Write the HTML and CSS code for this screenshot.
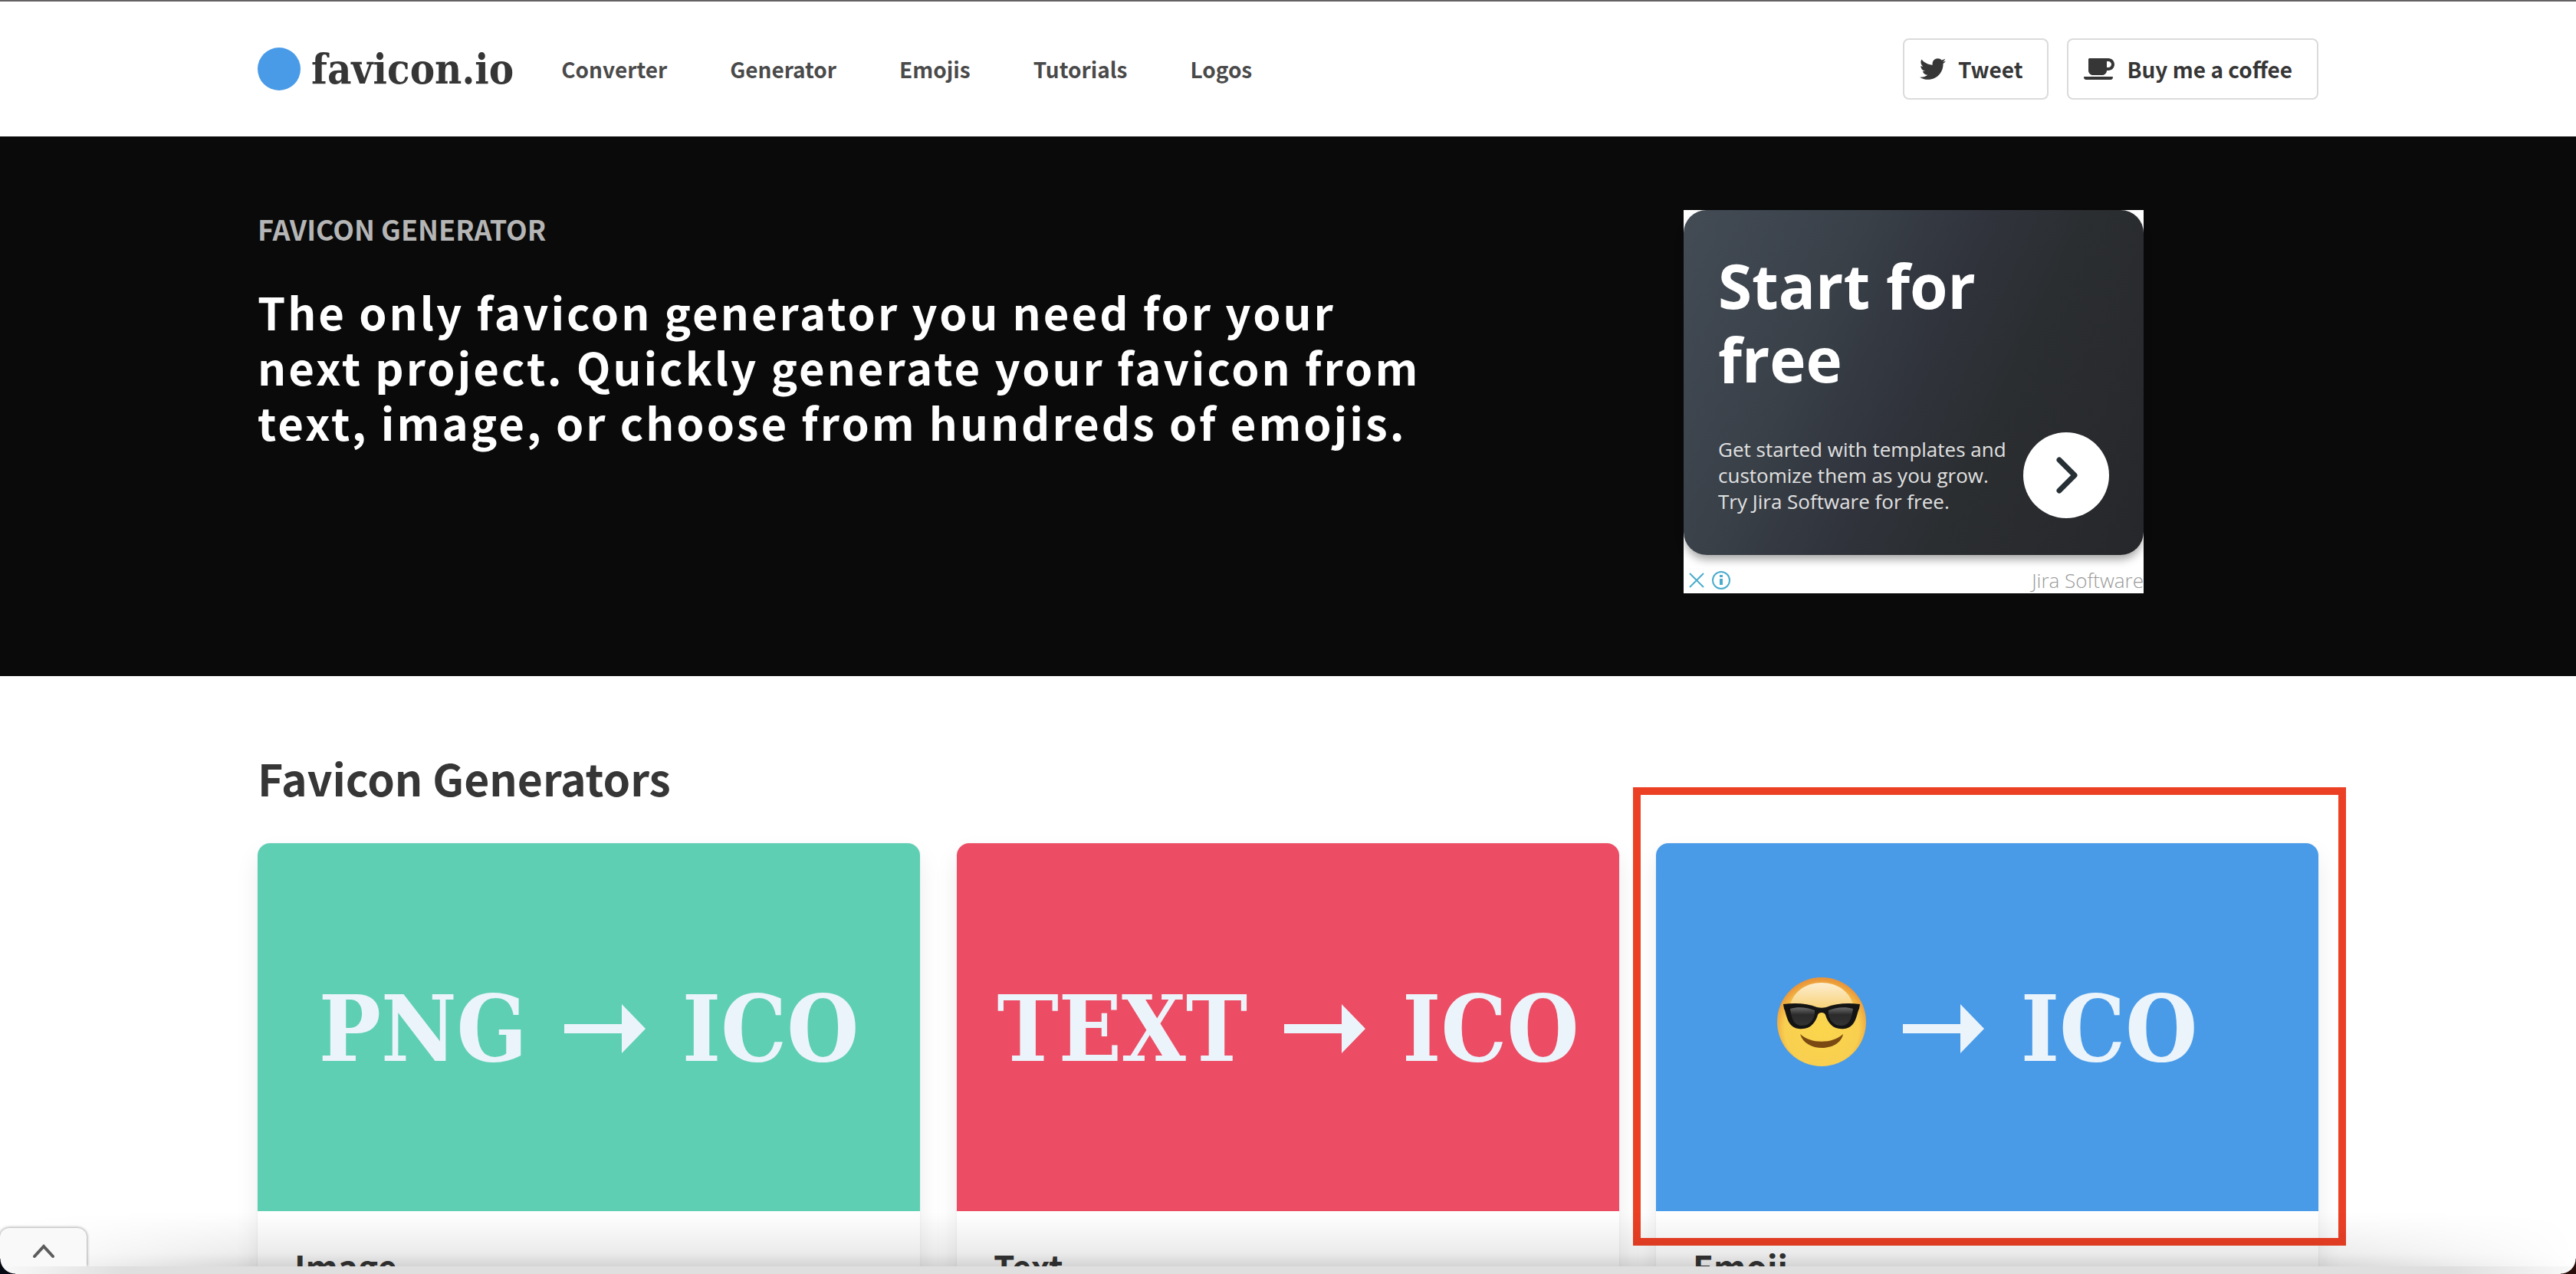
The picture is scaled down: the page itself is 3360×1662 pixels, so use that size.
FILE: index.html
```html
<!DOCTYPE html>
<html lang="en">
<head>
<meta charset="utf-8">
<meta name="viewport" content="width=device-width, initial-scale=1">
<title>favicon.io</title>
<link rel="stylesheet" href="styles.css">
</head>
<body>
<header class="header">
  <div class="container header-inner">
    <a class="brand" href="#"><span class="brand-dot"></span><span>favicon.io</span></a>
    <nav class="nav">
      <a href="#">Converter</a>
      <a href="#">Generator</a>
      <a href="#">Emojis</a>
      <a href="#">Tutorials</a>
      <a href="#">Logos</a>
    </nav>
    <div class="actions">
      <a class="button" href="#">
        <svg class="icon-bird" viewBox="0 0 512 512" aria-hidden="true"><path fill="currentColor" d="M459.37 151.716c.325 4.548.325 9.097.325 13.645 0 138.72-105.583 298.558-298.558 298.558-59.452 0-114.68-17.219-161.137-47.106 8.447.974 16.568 1.299 25.34 1.299 49.055 0 94.213-16.568 130.274-44.832-46.132-.975-84.792-31.188-98.112-72.772 6.498.974 12.995 1.624 19.818 1.624 9.421 0 18.843-1.3 27.614-3.573-48.081-9.747-84.143-51.98-84.143-102.985v-1.299c13.969 7.797 30.214 12.67 47.431 13.319-28.264-18.843-46.781-51.005-46.781-87.391 0-19.492 5.197-37.36 14.294-52.954 51.655 63.675 129.3 105.258 216.365 109.807-1.624-7.797-2.599-15.918-2.599-24.04 0-57.828 46.782-104.934 104.934-104.934 30.213 0 57.502 12.67 76.67 33.137 23.715-4.548 46.456-13.32 66.599-25.34-7.798 24.366-24.366 44.833-46.132 57.827 21.117-2.273 41.584-8.122 60.426-16.243-14.292 20.791-32.161 39.308-52.628 54.253z"/></svg>
        <span>Tweet</span>
      </a>
      <a class="button" href="#">
        <svg class="icon-cup" viewBox="0 0 640 512" aria-hidden="true"><path fill="currentColor" d="M192 384h192c53 0 96-43 96-96h32c70.600 0 128-57.400 128-128S582.600 32 512 32H120c-13.300 0-24 10.700-24 24v232c0 53 43 96 96 96zM512 96c35.300 0 64 28.700 64 64s-28.700 64-64 64h-32V96h32zm47.700 384H48.300c-47.600 0-61-64-36-64h583.300c25 0 11.800 64-35.900 64z"/></svg>
        <span>Buy me a coffee</span>
      </a>
    </div>
  </div>
</header>

<section class="hero">
  <div class="container hero-inner">
    <div class="hero-text">
      <p class="eyebrow">FAVICON GENERATOR</p>
      <h1 class="headline">The only favicon generator you need for your next project. Quickly generate your favicon from text, image, or choose from hundreds of emojis.</h1>
    </div>
    <aside class="ad">
      <a class="ad-card" href="#">
        <span class="ad-title">Start for free</span>
        <span class="ad-row">
          <span class="ad-copy">Get started with templates and customize them as you grow. Try Jira Software for free.</span>
          <svg class="ad-go" viewBox="0 0 112 112" aria-hidden="true"><circle cx="56" cy="56" r="56" fill="#fff"/><path d="M47 36l20 20-20 20" fill="none" stroke="#263035" stroke-width="7" stroke-linecap="round" stroke-linejoin="round"/></svg>
        </span>
      </a>
      <div class="ad-foot">
        <button class="ad-button" type="button" aria-label="Close ad"><svg viewBox="0 0 24 24"><path d="M3 3l18 18M21 3L3 21" fill="none" stroke="#4aaccc" stroke-width="2"/></svg></button>
        <button class="ad-button" type="button" aria-label="Ad information"><svg viewBox="0 0 24 24"><circle cx="12" cy="12" r="11" fill="none" stroke="#4aaccc" stroke-width="2"/><path d="M10 10h4v8h-4zM10 5h4v3h-4z" fill="#4aaccc"/></svg></button>
        <span class="ad-brand">Jira Software</span>
      </div>
    </aside>
  </div>
</section>

<main class="container generators">
  <h2 class="section-title">Favicon Generators</h2>
  <div class="cards">
    <a class="card" href="#">
      <div class="art art-green">
        <span>PNG</span>
        <svg class="arrow" viewBox="0 0 106 64" aria-hidden="true"><path d="M0 26h75V0l31 32-31 32V38H0z" fill="currentColor"/></svg>
        <span>ICO</span>
      </div>
      <h3 class="card-title">Image</h3>
    </a>
    <a class="card" href="#">
      <div class="art art-red">
        <span>TEXT</span>
        <svg class="arrow" viewBox="0 0 106 64" aria-hidden="true"><path d="M0 26h75V0l31 32-31 32V38H0z" fill="currentColor"/></svg>
        <span>ICO</span>
      </div>
      <h3 class="card-title">Text</h3>
    </a>
    <a class="card card-marked" href="#">
      <div class="art art-blue">
        <svg class="face" viewBox="0 0 116 116" aria-hidden="true">
          <defs>
            <radialGradient id="skin" cx="50%" cy="58%" r="56%"><stop offset="0" stop-color="#fbd64c"/><stop offset=".75" stop-color="#f8cf50"/><stop offset="1" stop-color="#ea9538"/></radialGradient>
            <linearGradient id="shine" x1="0" y1="0" x2="0" y2="1"><stop offset="0" stop-color="#fdeed0"/><stop offset="1" stop-color="#f8d27a"/></linearGradient>
            <linearGradient id="lens" x1="0" y1="0" x2="0" y2="1"><stop offset="0" stop-color="#6a6a6a"/><stop offset=".4" stop-color="#2b2b2b"/><stop offset="1" stop-color="#333"/></linearGradient>
          </defs>
          <circle cx="58" cy="58" r="58" fill="url(#skin)"/>
          <path d="M16 40C20 18 38 7 58 7s38 11 42 33z" fill="url(#shine)"/>
          <path d="M8 35c16-2 32-1 44 4 4 1 8 1 12 0 12-5 28-6 44-4l-1 6c-3 4-3 24-19 26-15 2-22-8-25-18-1-4-9-4-10 0-3 10-10 20-25 18-16-2-16-22-19-26z" fill="#141414"/>
          <path d="M17 41c10-3 22-2 32 2 1 9-5 20-16 20S19 55 17 41zM99 41c-10-3-22-2-32 2-1 9 5 20 16 20s14-8 16-22z" fill="url(#lens)"/>
          <path d="M30 74c14 13 42 13 56 0-4 23-49 25-56 0z" fill="#7a4a12"/>
        </svg>
        <svg class="arrow" viewBox="0 0 106 64" aria-hidden="true"><path d="M0 26h75V0l31 32-31 32V38H0z" fill="currentColor"/></svg>
        <span>ICO</span>
      </div>
      <h3 class="card-title">Emoji</h3>
    </a>
  </div>
</main>

<div class="shelf">
  <button class="shelf-tab" type="button" aria-label="Show"><svg viewBox="0 0 30 20"><path d="M3 17L15 4l12 13" fill="none" stroke="#5c5c5c" stroke-width="4" stroke-linecap="round"/></svg></button>
  <div class="shelf-bar"></div>
</div>
</body>
</html>
```
FILE: styles.css
```css
*, *::before, *::after { box-sizing: border-box; }

body {
  margin: 0;
  height: 100vh;
  overflow: hidden;
  background: #fff;
  color: #363636;
  font-family: "Source Sans Pro", "Noto Sans CJK SC", sans-serif;
  font-weight: 700;
}

a { color: inherit; text-decoration: none; }
h1, h2, h3, p { margin: 0; font-weight: 700; }
button { border: 0; padding: 0; background: none; }
svg { display: block; flex: none; }

.container { width: 80%; margin: 0 auto; }

.header { border-top: 2px solid #656263; }
.header-inner { display: flex; align-items: center; height: 176px; }

.brand {
  display: flex;
  align-items: center;
  gap: 14px;
  font: 700 54px/60px "Roboto Slab", "DejaVu Serif Condensed", "DejaVu Serif", serif;
}
.brand-dot { width: 56px; height: 56px; border-radius: 50%; background: #499be8; }

.nav {
  display: flex;
  gap: 82px;
  margin-left: 62px;
  color: #4a4a4a;
  font-size: 28px;
  line-height: 40px;
}

.actions { display: flex; gap: 24px; margin-left: auto; font-size: 28px; line-height: 40px; }
.button {
  display: flex;
  align-items: center;
  gap: 16px;
  height: 80px;
  padding: 0 32px 0 20px;
  border: 2px solid #dbdbdb;
  border-radius: 8px;
}
.icon-bird { width: 34px; height: 34px; }
.icon-cup { width: 40px; height: 32px; }

.hero { background: #0a0a0a; color: #fff; }
.hero-inner { display: flex; justify-content: space-between; padding: 96px 0 108px; }
.eyebrow { color: #b5b5b5; font-size: 36px; line-height: 48px; }
.headline {
  max-width: 1540px;
  margin-top: 48px;
  font-size: 58px;
  line-height: 72px;
  letter-spacing: 3px;
}

.ad {
  width: 600px;
  height: 500px;
  margin-right: 228px;
  background: #fff;
  font-family: "Open Sans", sans-serif;
}
.ad-card {
  display: flex;
  flex-direction: column;
  justify-content: space-between;
  height: 450px;
  padding: 50px 45px 48px;
  border-radius: 30px;
  background: linear-gradient(115deg, #434b55 0%, #394048 30%, #30333b 50%, #2b2e31 65%, #26272a 100%);
  box-shadow: 0 8px 12px -2px rgba(0, 0, 0, .35);
}
.ad-title { width: 400px; font-size: 80px; font-weight: 700; line-height: 96px; }
.ad-row { display: flex; align-items: center; justify-content: space-between; }
.ad-copy { width: 390px; color: #e0e0e0; font-size: 26px; font-weight: 400; line-height: 34px; }
.ad-go { width: 112px; height: 112px; }
.ad-foot { display: flex; align-items: center; gap: 8px; height: 50px; padding: 16px 0 0 5px; }
.ad-button svg { width: 24px; height: 24px; }
.ad-brand { margin-left: auto; color: #999; font-size: 26px; font-weight: 300; line-height: 34px; }

.generators { padding-top: 92px; }
.section-title { font-size: 57px; line-height: 80px; }
.cards { display: grid; grid-template-columns: repeat(3, 1fr); gap: 48px; margin-top: 46px; }
.card {
  position: relative;
  border-radius: 16px;
  background: #fff;
  box-shadow: 0 16px 32px rgba(10, 10, 10, .08), 0 0 2px rgba(10, 10, 10, .08);
}
.art {
  display: flex;
  align-items: center;
  justify-content: center;
  gap: 48px;
  height: 480px;
  padding-top: 4px;
  border-radius: 16px 16px 0 0;
  color: #ecf4fb;
  font: 700 120px/140px "Roboto Slab", "DejaVu Serif Condensed", "DejaVu Serif", serif;
}
.art-green { background: #5fcfb4; }
.art-red { background: #ec4d64; }
.art-blue { background: #499be8; }
.arrow { width: 106px; height: 64px; }
.face { width: 116px; height: 116px; margin-bottom: 18px; }
.card-title { padding: 42px 48px 48px; font-size: 44px; line-height: 60px; }

/* annotation frame drawn round the emoji card */
.card-marked::after {
  content: "";
  position: absolute;
  inset: -73px -36px auto -30px;
  height: 598px;
  border: 10px solid #ec4025;
}

/* window shelf that lies over the foot of the page */
.shelf { position: fixed; inset: auto 0 0 0; }
.shelf::before {
  content: "";
  position: absolute;
  inset: -20px 0 10px;
  background: linear-gradient(transparent, rgba(0, 0, 0, .08) 75%, rgba(0, 0, 0, .17));
  -webkit-mask-image: linear-gradient(90deg, transparent, #000 340px calc(100% - 340px), transparent);
  mask-image: linear-gradient(90deg, transparent, #000 340px calc(100% - 340px), transparent);
}
.shelf-tab {
  position: relative;
  display: flex;
  align-items: center;
  justify-content: center;
  width: 113px;
  height: 50px;
  border-radius: 12px 12px 0 0;
  background: #f9f9f9;
  box-shadow: 0 0 4px rgba(0, 0, 0, .5);
}
.shelf-tab svg { width: 30px; height: 20px; margin-top: 10px; }
.shelf-bar {
  position: relative;
  height: 10px;
  background: linear-gradient(90deg, #f9f9f9, #dfdfdf 160px calc(100% - 160px), #f9f9f9);
}
.shelf-bar::before,
.shelf-bar::after {
  content: "";
  position: absolute;
  bottom: 0;
  width: 20px;
  height: 20px;
}
.shelf-bar::before { left: 0; background: radial-gradient(circle at 100% 0, transparent 19px, #050914 20px); }
.shelf-bar::after { right: 0; background: radial-gradient(circle at 0 0, transparent 19px, #2a0c08 20px); }
```
